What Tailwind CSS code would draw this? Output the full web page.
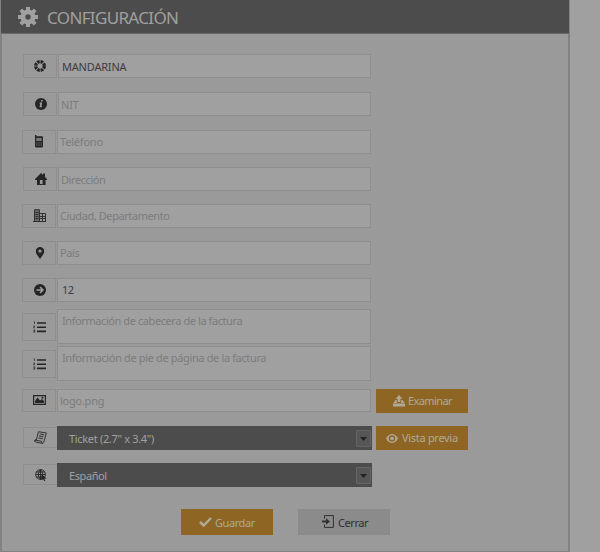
<!DOCTYPE html>
<html lang="es">
<head>
<meta charset="utf-8">
<title>Configuración</title>
<script src="https://cdn.jsdelivr.net/npm/@tailwindcss/browser@4"></script>
</head>
<body class="w-[600px] h-[552px] overflow-hidden bg-[#a0a0a0] font-['Noto_Sans','Open_Sans',sans-serif] text-[11px] tracking-[-0.42px] leading-[15px] text-[#7c7c7c]">
<main class="flex flex-col w-[570px] h-[552px] bg-[#9a9a9a] border-l-2 border-r-2 border-b border-[#828282]">
  <header class="flex items-center shrink-0 h-[34px] -ml-px -mr-px pl-[17px] bg-[#4c4c4c] border-b border-[#696969] text-[#a0a0a0]">
    <svg class="w-5 h-5" viewBox="0 0 20 20" fill="none" stroke="currentColor"><circle cx="10" cy="10" r="5.100" stroke-width="4.800"/><path stroke-width="4" d="M10 0v4M10 16v4M0 10h4M16 10h4M2.800 2.800l3 3M14.200 14.200l3 3M17.200 2.800l-3 3M5.800 14.200l-3 3"/></svg>
    <h1 class="ml-[9px] mt-[3px] text-[17px] leading-[22px] tracking-[-0.65px]">CONFIGURACIÓN</h1>
  </header>

  <form class="flex flex-col pl-[20px] pt-[20px]">
    <div class="flex gap-px h-6 ml-px">
      <span class="flex items-center justify-center w-[34px] border border-[#8e8e8e] text-[#252525]"><svg class="w-3 h-3" viewBox="0 0 12 12" fill="none" stroke="currentColor"><circle cx="6" cy="6" r="4.300" stroke-width="3.300" stroke-dasharray="2.580 .797"/></svg></span>
      <span class="w-[313px] pl-[3px] pt-[4px] border border-[#8e8e8e] bg-[#a0a0a0] text-[#3d3d3d] tracking-[-0.2px]">MANDARINA</span>
    </div>
    <div class="flex gap-px h-6 ml-px mt-[14px]">
      <span class="flex items-center justify-center w-[34px] border border-[#8e8e8e] text-[#252525]"><svg class="w-3 h-3 ml-px" viewBox="0 0 12 12"><circle cx="6" cy="6" r="6" fill="currentColor"/><path d="M6.100 2h1.700l-.3 1.600H5.800zM4.600 4.600h2.600l-.8 3.600h.8l-.2 1H4.500L5.200 5.600h-.8z" fill="#a0a0a0"/></svg></span>
      <span class="w-[313px] pl-[2px] pt-[4px] border border-[#8e8e8e] bg-[#a0a0a0] tracking-[-0.2px]">NIT</span>
    </div>
    <div class="flex gap-px h-6 mt-[14px]">
      <span class="flex items-center justify-center w-[34px] border border-[#8e8e8e] text-[#252525]"><svg class="w-3 h-[13px] -mt-px" viewBox="0 0 12 13"><path d="M2 0h1.500v1.200H9q1 0 1 1v9q0 1.400-1.400 1.400H3.200Q2 12.600 2 11.200z" fill="currentColor"/><path d="M3.200 3h5.500v3H3.200zM3.200 7.500h1.200v1H3.200zM5.400 7.500h1.200v1H5.400zM7.600 7.500h1.200v1H7.600zM3.200 9.600h1.200v1H3.200zM5.400 9.600h1.200v1H5.400zM7.600 9.600h1.200v1H7.600z" fill="#777"/></svg></span>
      <span class="w-[314px] pl-[2px] pt-[3px] border border-[#8e8e8e] bg-[#a0a0a0] tracking-[-0.2px]">Teléfono</span>
    </div>
    <div class="flex gap-px h-6 ml-px mt-[13px]">
      <span class="flex items-center justify-center w-[34px] border border-[#8e8e8e] text-[#252525]"><svg class="w-3 h-3 ml-px" viewBox="0 0 12 12" fill="currentColor"><path d="M6 0l2 2V.5h2V4l2 2v1h-1.500v5H7.600V7H4.900v5H2V7H0V6z"/><path d="M4.900 11h2.700v1H4.900z"/></svg></span>
      <span class="w-[313px] pl-[2px] pt-[4px] border border-[#8e8e8e] bg-[#a0a0a0]">Dirección</span>
    </div>
    <div class="flex gap-px h-6 mt-[13px]">
      <span class="flex items-center justify-center w-[34px] border border-[#8e8e8e] text-[#303030]"><svg class="w-[13px] h-[13px] -mt-px" viewBox="0 0 13 13" fill="none" stroke="currentColor"><path d="M1.500 1h5v11h-5z" fill="#666" stroke="none"/><path d="M0 12.500h13M1.500 12V.700h5V12M7 4.500h5.500V12M2.500 3.500h3M2.500 5.500h3M2.500 7.500h3M2.500 9.500h3M9.500 5v7M7 7.500h5M7 9.500h5"/></svg></span>
      <span class="w-[314px] pl-[2px] pt-[3px] border border-[#8e8e8e] bg-[#a0a0a0]">Ciudad, Departamento</span>
    </div>
    <div class="flex gap-px h-6 mt-[13px]">
      <span class="flex items-center justify-center w-[34px] border border-[#8e8e8e] text-[#252525]"><svg class="w-[10px] h-3 ml-px -mt-px" viewBox="0 0 10 12"><path fill="currentColor" fill-rule="evenodd" d="M5 0a4.200 4.200 0 0 1 4.200 4.200C9.200 7 6.500 9.500 5 12 3.500 9.500.8 7 .8 4.200A4.200 4.200 0 0 1 5 0m0 2.500a1.600 1.600 0 1 0 0 3.200 1.600 1.600 0 0 0 0-3.200"/></svg></span>
      <span class="w-[314px] pl-[2px] pt-[3px] border border-[#8e8e8e] bg-[#a0a0a0]">País</span>
    </div>
    <div class="flex gap-px h-6 mt-[13px]">
      <span class="flex items-center justify-center w-[34px] border border-[#8e8e8e] text-[#252525]"><svg class="w-3 h-3 -mt-px ml-px" viewBox="0 0 12 12"><circle cx="6" cy="6" r="6" fill="currentColor"/><path d="M2.500 6h6M6 3l3 3-3 3" fill="none" stroke="#a0a0a0" stroke-width="1.500"/></svg></span>
      <span class="w-[314px] pl-[4px] pt-[3px] border border-[#8e8e8e] bg-[#a0a0a0] text-[#3d3d3d]">12</span>
    </div>
    <div class="flex items-center gap-px h-[35px] mt-[7px]">
      <span class="flex items-center justify-center w-[34px] h-7 mt-px border border-[#8e8e8e] text-[#252525]"><svg class="w-[13px] h-3" viewBox="0 0 13 12" fill="none" stroke="currentColor"><path stroke-width="1.600" d="M4 2h9M4 6.200h9M4 10.400h9"/><path stroke-width=".7" d="M.7.8h.8v2.200M.3 5h1.500L.5 6.800h1.500M.3 9h1.500v2.200H.3M.6 10.100h1.200"/></svg></span>
      <span class="w-[314px] h-[35px] pl-[4px] pt-[3px] border border-[#8e8e8e] bg-[#a0a0a0]">Información de cabecera de la factura</span>
    </div>
    <div class="flex items-center gap-px h-[35px] mt-[2px]">
      <span class="flex items-center justify-center w-[34px] h-7 mt-px border border-[#8e8e8e] text-[#252525]"><svg class="w-[13px] h-3" viewBox="0 0 13 12" fill="none" stroke="currentColor"><path stroke-width="1.600" d="M4 2h9M4 6.200h9M4 10.400h9"/><path stroke-width=".7" d="M.7.8h.8v2.200M.3 5h1.500L.5 6.800h1.500M.3 9h1.500v2.200H.3M.6 10.100h1.200"/></svg></span>
      <span class="w-[314px] h-[35px] pl-[4px] pt-[3px] border border-[#8e8e8e] bg-[#a0a0a0] tracking-[-0.36px]">Información de pie de página de la factura</span>
    </div>
    <div class="flex h-6 mt-[8px]">
      <span class="flex items-center justify-center w-[34px] h-[23px] border border-[#8e8e8e] text-[#252525]"><svg class="w-[13px] h-[10px] -mt-px" viewBox="0 0 13 10"><path d="M.6.6h11.800v8.800H.6z" fill="none" stroke="currentColor" stroke-width="1.200"/><path d="M2 8V6l2.500-3.500 2.500 3 2-1.500L11 6v2z" fill="currentColor"/><circle cx="9.500" cy="2.700" r="1" fill="currentColor"/></svg></span>
      <span class="w-[314px] h-[23px] ml-px pl-[2px] pt-[3px] border border-[#8e8e8e] bg-[#a0a0a0] tracking-[-0.25px]">logo.png</span>
      <button type="button" class="flex items-center w-[92px] h-6 ml-[5px] pl-[17px] bg-[#8f6524] text-[#b0a996]"><svg class="w-3 h-3" viewBox="0 0 12 12" fill="currentColor"><path d="M6 0l3.500 3.800H7.300V7H4.700V3.800H2.500zM2.500 5h1.300v3h4.400V5h1.300L12 8.500H0zM0 9h12v2.500H0z"/></svg><span class="ml-[3px] -mt-px tracking-[-0.6px]">Examinar</span></button>
    </div>
    <div class="flex h-6 mt-[13px]">
      <span class="flex items-center justify-center w-[34px] h-[21px] ml-px mt-px border border-r-0 border-[#8e8e8e] text-[#303030]"><svg class="w-[13px] h-[13px]" viewBox="0 0 13 13" fill="none" stroke="currentColor"><path d="M4.500.7L12.400 2 9.600 11.500q-.5 1-1.600.8L1.500 11Q.3 10.400.8 9l1.500.2zM1 9l6.500 1.300q0 1.500 1 2M5.600 3l4.500.8M5 5l4.500.8M4.400 7l4.400.8"/></svg></span>
      <span class="flex w-[315px] h-6 pl-[12px] pt-[5px] bg-[#4c4c4c] text-[#a0a0a0] tracking-[-0.32px]"><span class="grow">Ticket (2.7" x 3.4")</span><span class="flex items-center justify-center w-[15px] h-[17px] -mt-px mr-px rounded-[1px] border border-[#656565] bg-[#565656]"><svg class="w-[7px] h-1" viewBox="0 0 7 4"><path d="M0 0h7L3.500 4z" fill="#222"/></svg></span></span>
      <button type="button" class="flex items-center w-[92px] h-6 ml-1 pl-[10px] bg-[#8f6524] text-[#b0a996]"><svg class="w-3 h-[9px]" viewBox="0 0 12 9"><path fill="currentColor" fill-rule="evenodd" d="M0 4.500Q2.500 0 6 0t6 4.500Q9.500 9 6 9T0 4.500M6 1.300a3.200 3.200 0 1 0 0 6.400 3.200 3.200 0 0 0 0-6.400"/><circle cx="6" cy="4.500" r="1.800" fill="currentColor"/></svg><span class="ml-1 -mt-px tracking-[-0.3px]">Vista previa</span></button>
    </div>
    <div class="flex h-6 mt-[13px]">
      <span class="flex items-center justify-center w-[34px] h-[21px] ml-px mt-px border border-r-0 border-[#8e8e8e] text-[#252525]"><svg class="w-3 h-3" viewBox="0 0 12 12"><path d="M5.500.6a4.900 4.900 0 1 0 .1 0M5.500.6q-4.500 4.900 0 9.800M5.500.6q4.500 4.900 0 9.800M5.500.6v9.800M.6 5.500h9.800M1.300 3h8.400M1.300 8h8.400" fill="none" stroke="currentColor" stroke-width=".9"/><path d="M6.500 5l5 4.500-2.200.2L10.300 12l-1.200.1-1-2.200-1.600 1.300z" fill="currentColor"/></svg></span>
      <span class="flex w-[315px] h-6 pl-[12px] pt-[5px] bg-[#4c4c4c] text-[#a0a0a0]"><span class="grow">Español</span><span class="flex items-center justify-center w-[15px] h-[17px] -mt-px mr-px rounded-[1px] border border-[#656565] bg-[#565656]"><svg class="w-[7px] h-1" viewBox="0 0 7 4"><path d="M0 0h7L3.500 4z" fill="#222"/></svg></span></span>
    </div>
    <div class="flex gap-[25px] h-[26px] mt-[22px] ml-[159px]">
      <button type="button" class="flex items-center w-[92px] pl-[18px] bg-[#8f6524] text-[#b0a996]"><svg class="w-[13px] h-[10px] -mt-px" viewBox="0 0 13 10"><path d="M1 5l3.700 3.500L12 1" fill="none" stroke="currentColor" stroke-width="2.500"/></svg><span class="ml-[3px]">Guardar</span></button>
      <button type="button" class="flex items-center w-[92px] pl-[24px] bg-[#8b8b8b] text-[#303030]"><svg class="w-3 h-[13px] -mt-px" viewBox="0 0 12 13" fill="none" stroke="currentColor"><path d="M2.500 3.500V.600h8.900v11.800H2.500V9.500"/><path d="M0 6.500h5" stroke-width="2"/><path d="M4 3.200l4 3.300-4 3.300z" fill="currentColor" stroke="none"/></svg><span class="ml-[4px]">Cerrar</span></button>
    </div>
  </form>
</main>
</body>
</html>
